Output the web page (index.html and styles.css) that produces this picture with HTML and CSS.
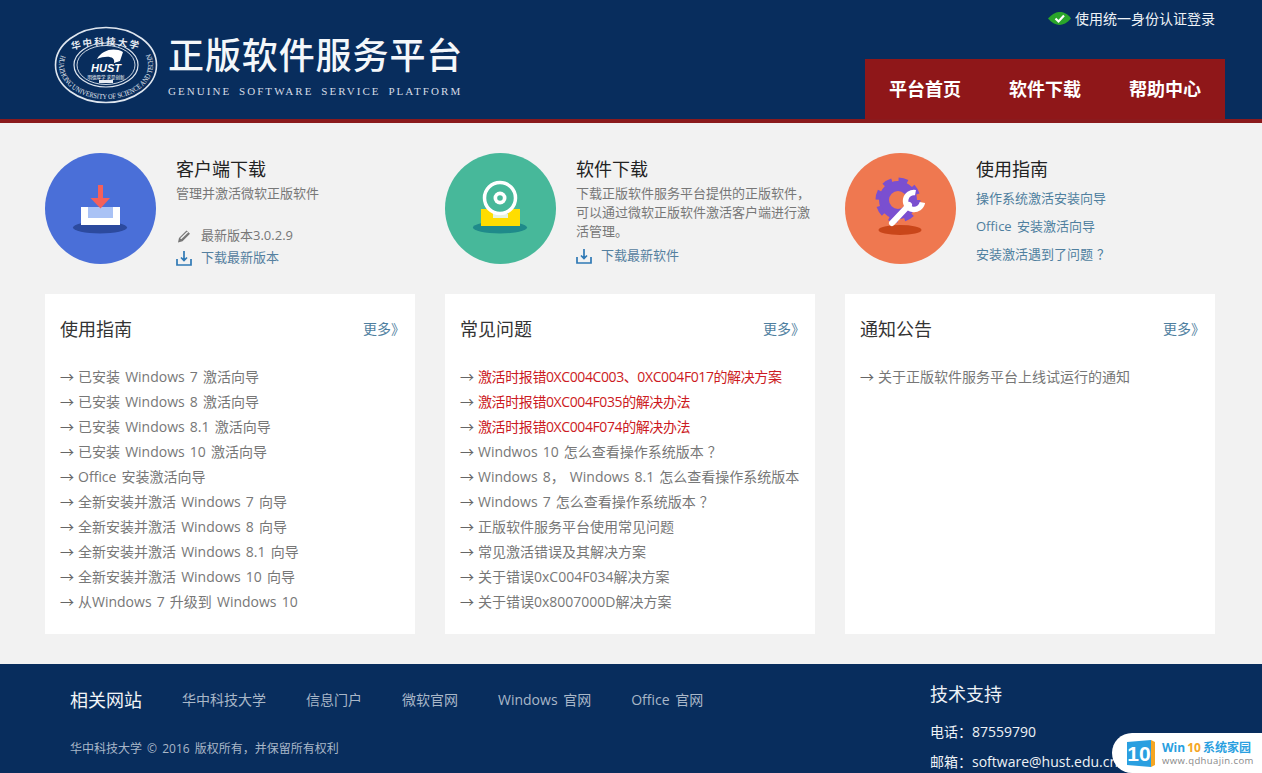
FILE: index.html
```html
<!DOCTYPE html>
<html lang="zh-CN">
<head>
<meta charset="utf-8">
<title>正版软件服务平台</title>
<link rel="stylesheet" href="styles.css">
</head>
<body>
<header class="header">
  <div class="brand">
    <svg class="seal" width="104" height="78" viewBox="0 0 104 78">
      <defs>
        <path id="sealTop" d="M14 25Q52 13 90 25"/>
        <path id="sealBottom" d="M7.100 29A47 34 0 1 0 96.900 29"/>
      </defs>
      <ellipse cx="52" cy="39" rx="50.500" ry="37.500" fill="none" stroke="#dfe6ef" stroke-width="1.600"/>
      <ellipse cx="52" cy="39" rx="32" ry="22" fill="none" stroke="#dfe6ef" stroke-width="1.200"/>
      <ellipse cx="52" cy="39" rx="29" ry="19.500" fill="none" stroke="#dfe6ef" stroke-width=".9"/>
      <text class="seal-cn"><textPath href="#sealTop" startOffset="50%" text-anchor="middle">华中科技大学</textPath></text>
      <text class="seal-en"><textPath href="#sealBottom" textLength="172" lengthAdjust="spacingAndGlyphs">HUAZHONG UNIVERSITY OF SCIENCE AND TECHNOLOGY</textPath></text>
      <path d="M43 33C48 24 60 21 69 26L66 35 60 37C62 30 52 29 43 33Z" fill="#fff"/>
      <text x="37" y="46" class="seal-hust">HUST</text>
      <text x="52" y="52.500" class="seal-motto">明德厚学 求是创新</text>
      <rect x="45" y="54" width="14" height="3" fill="#e6ebf2"/>
    </svg>
    <div class="brand-text">
      <div class="brand-title">正版软件服务平台</div>
      <div class="brand-sub">GENUINE SOFTWARE SERVICE PLATFORM</div>
    </div>
  </div>
  <div class="header-right">
    <a class="login">
      <svg width="23" height="13" viewBox="0 0 23 13"><path d="M0 6.500C5 1 9 0 12 0s8 1.500 11 6.500C19 11 15 13 11.500 13S4 11 0 6.500Z" fill="#2aa52a"/><path d="M7.500 6.500l3 3 5.500-6" fill="none" stroke="#fff" stroke-width="2.200"/></svg>
      使用统一身份认证登录
    </a>
    <nav class="nav">
      <a>平台首页</a><a>软件下载</a><a>帮助中心</a>
    </nav>
  </div>
</header>

<main class="main">
  <section class="features">
    <article class="feature">
      <svg class="badge" width="111" height="111" viewBox="0 0 111 111">
        <circle cx="55.500" cy="55.500" r="55.500" fill="#4a6fd8"/>
        <ellipse cx="55" cy="74.500" rx="27" ry="6" fill="#2c4a9e"/>
        <rect x="36" y="54" width="39" height="18" fill="#fff"/>
        <rect x="43" y="54" width="25" height="11" fill="#a9c2f5"/>
        <path d="M53 32h5v13h7L55.500 55.500 45.500 45H53Z" fill="#f4605a"/>
      </svg>
      <div class="feature-body">
        <h2>客户端下载</h2>
        <p class="desc">管理并激活微软正版软件</p>
        <div class="version">
          <svg width="16" height="16" viewBox="0 0 16 16"><path d="M2 14.500l1-4.500L10.500 2.500l3.500 3.200-7.500 7.500Z" fill="#777"/><path d="M4.200 10.200l7-6.700 1 .9-7 6.800Z" fill="#f2f2f2"/></svg>
          <span>最新版本3.0.2.9</span>
        </div>
        <a class="dl dl-snug">
          <svg width="16" height="16" viewBox="0 0 16 16"><path d="M1 9v6h14V9M8 1v9M5 7.500l3 3 3-3" fill="none" stroke="#2f79b5" stroke-width="1.700"/></svg>
          <span>下载最新版本</span>
        </a>
      </div>
    </article>
    <article class="feature">
      <svg class="badge" width="111" height="111" viewBox="0 0 111 111">
        <circle cx="55.500" cy="55.500" r="55.500" fill="#47b89a"/>
        <ellipse cx="55" cy="74.500" rx="27" ry="6" fill="#1f8a8a"/>
        <rect x="36" y="56" width="39" height="17" fill="#ffdd00"/>
        <rect x="48" y="57" width="15" height="7" fill="#47b89a"/>
        <rect x="48" y="61" width="15" height="4" fill="#e6f3e0"/>
        <circle cx="55" cy="45" r="15.500" fill="#47b89a" stroke="#fff" stroke-width="3.500"/>
        <circle cx="55" cy="45" r="6.500" fill="#fff"/>
        <circle cx="55" cy="45" r="2.800" fill="#47b89a"/>
      </svg>
      <div class="feature-body">
        <h2>软件下载</h2>
        <p class="desc">下载正版软件服务平台提供的正版软件，<br>可以通过微软正版软件激活客户端进行激<br>活管理。</p>
        <a class="dl dl-tight">
          <svg width="16" height="16" viewBox="0 0 16 16"><path d="M1 9v6h14V9M8 1v9M5 7.500l3 3 3-3" fill="none" stroke="#2f79b5" stroke-width="1.700"/></svg>
          <span>下载最新软件</span>
        </a>
      </div>
    </article>
    <article class="feature">
      <svg class="badge" width="111" height="111" viewBox="0 0 111 111">
        <circle cx="55.500" cy="55.500" r="55.500" fill="#ef7850"/>
        <ellipse cx="55" cy="77" rx="21.500" ry="5" fill="#c9461a"/>
        <circle cx="53" cy="47" r="14" fill="none" stroke="#7a4fd0" stroke-width="10"/>
        <circle cx="53" cy="47" r="20" fill="none" stroke="#7a4fd0" stroke-width="5" stroke-dasharray="9 6.700"/>
        <path d="M47 70L64 52" fill="none" stroke="#fff" stroke-width="6" stroke-linecap="round"/>
        <path d="M70.500 39.600A8.500 8.500 0 1 0 77.400 49.500" fill="none" stroke="#fff" stroke-width="5.500"/>
      </svg>
      <div class="feature-body">
        <h2>使用指南</h2>
        <ul class="guide">
          <li><a>操作系统激活安装向导</a></li>
          <li><a>Office 安装激活向导</a></li>
          <li><a>安装激活遇到了问题<span class="qm">？</span></a></li>
        </ul>
      </div>
    </article>
  </section>

  <section class="cards">
    <article class="card">
      <div class="card-head"><h3>使用指南</h3><a class="more">更多》</a></div>
      <ul class="list">
        <li>已安装 Windows 7 激活向导</li>
        <li>已安装 Windows 8 激活向导</li>
        <li>已安装 Windows 8.1 激活向导</li>
        <li>已安装 Windows 10 激活向导</li>
        <li>Office 安装激活向导</li>
        <li>全新安装并激活 Windows 7 向导</li>
        <li>全新安装并激活 Windows 8 向导</li>
        <li>全新安装并激活 Windows 8.1 向导</li>
        <li>全新安装并激活 Windows 10 向导</li>
        <li>从Windows 7 升级到 Windows 10</li>
      </ul>
    </article>
    <article class="card">
      <div class="card-head"><h3>常见问题</h3><a class="more">更多》</a></div>
      <ul class="list">
        <li><span class="red">激活时报错0XC004C003、0XC004F017的解决方案</span></li>
        <li><span class="red">激活时报错0XC004F035的解决办法</span></li>
        <li><span class="red">激活时报错0XC004F074的解决办法</span></li>
        <li>Windwos 10 怎么查看操作系统版本<span class="qm">？</span></li>
        <li>Windows 8， Windows 8.1 怎么查看操作系统版本</li>
        <li>Windows 7 怎么查看操作系统版本<span class="qm">？</span></li>
        <li>正版软件服务平台使用常见问题</li>
        <li>常见激活错误及其解决方案</li>
        <li>关于错误0xC004F034解决方案</li>
        <li>关于错误0x8007000D解决方案</li>
      </ul>
    </article>
    <article class="card">
      <div class="card-head"><h3>通知公告</h3><a class="more">更多》</a></div>
      <ul class="list">
        <li>关于正版软件服务平台上线试运行的通知</li>
      </ul>
    </article>
  </section>
</main>

<footer class="footer">
  <div class="footer-left">
    <div class="links">
      <h4>相关网站</h4>
      <a>华中科技大学</a><a>信息门户</a><a>微软官网</a><a>Windows 官网</a><a>Office 官网</a>
    </div>
    <p class="copy">华中科技大学 © 2016 版权所有，并保留所有权利</p>
  </div>
  <div class="support">
    <h4>技术支持</h4>
    <p>电话：87559790</p>
    <p>邮箱：software@hust.edu.cn</p>
  </div>
</footer>

<div class="watermark">
  <svg width="28" height="27" viewBox="0 0 28 27">
    <path d="M0 2l24-2v27l-24-2Z" fill="#2a9fe0"/>
    <path d="M24 0l4 2v23l-4 2Z" fill="#f5a623"/>
    <text x="12" y="21" class="wm-logo">10</text>
  </svg>
  <div class="wm-text">
    <div class="wm-title">Win<span class="wm-ten">10</span>系统家园</div>
    <div class="wm-url">www.qdhuajin.com</div>
  </div>
</div>
</body>
</html>
```

FILE: styles.css
```css
* { box-sizing: border-box; }
html, body { margin: 0; padding: 0; height: 773px; overflow: hidden; }
body {
  position: relative;
  background: #f2f2f2;
  font-family: "Open Sans", "Noto Sans CJK SC", sans-serif;
  font-size: 14px;
  color: #777;
}
h2, h3, h4, p, ul { margin: 0; padding: 0; font-weight: 400; }
ul { list-style: none; }
.qm { padding-left: 4px; }

.header {
  height: 123px;
  background: #082d5d;
  border-bottom: 4px solid #8b1a1d;
  display: flex;
  justify-content: space-between;
  padding: 0 37px 0 54px;
}
.brand { display: flex; align-items: flex-start; gap: 10px; height: 119px; }
.seal { display: block; margin-top: 26px; flex: none; overflow: visible; }
.seal-cn { font-size: 9.500px; fill: #e6ebf2; font-family: "Noto Sans CJK SC", sans-serif; letter-spacing: 2px; font-weight: 700; }
.seal-en { font-size: 7.500px; fill: #e6ebf2; font-family: "Liberation Serif", serif; }
.seal-hust { font-size: 11px; fill: #fff; font-family: "Liberation Sans", sans-serif; font-weight: 700; font-style: italic; }
.seal-motto { font-size: 4.500px; fill: #fff; text-anchor: middle; font-family: "Noto Sans CJK SC", sans-serif; }
.brand-text { width: 295px; padding-top: 31px; }
.brand-title { font-size: 36px; line-height: 44px; letter-spacing: .9px; font-weight: 500; color: #f4f7fa; white-space: nowrap; font-family: "Noto Sans CJK SC", sans-serif; }
.brand-sub { margin-top: 10px; font-family: "Liberation Serif", serif; font-size: 11px; line-height: 12px; letter-spacing: 2.050px; word-spacing: 3px; color: #d5dce6; white-space: nowrap; }

.header-right { display: flex; flex-direction: column; align-items: flex-end; }
.login { display: flex; align-items: center; gap: 4px; height: 20px; margin-top: 8px; margin-right: 10px; color: #eef2f6; font-size: 14px; white-space: nowrap; }
.nav { display: flex; margin-top: 31px; height: 60px; background: #8f1719; }
.nav a { width: 120px; line-height: 60px; text-align: center; color: #fff; font-size: 18px; font-weight: 700; }

.main { padding: 30px 47px 30px 45px; height: 541px; }
.features { display: flex; gap: 30px; height: 141px; }
.feature { width: 370px; display: flex; gap: 20px; }
.badge { flex: none; display: block; }
.feature-body { flex: 1; min-width: 0; }
.feature h2 { font-size: 18px; line-height: 24px; color: #222; margin-top: 4px; }
.desc { margin-top: 3px; font-size: 13px; line-height: 19px; color: #777; }
.version, .dl { display: flex; align-items: center; gap: 9px; font-size: 13px; line-height: 23px; }
.version { margin-top: 21px; }
.dl { color: #55809f; }
.dl-snug { margin-top: -1px; }
.dl-tight { margin-top: 3px; }
.guide { margin-top: 3px; }
.guide li { font-size: 13px; line-height: 28px; color: #4f7f9f; word-spacing: 2px; }

.cards { display: flex; gap: 30px; height: 340px; }
.card { width: 370px; height: 340px; background: #fff; padding: 0 10px 0 15px; }
.card-head { display: flex; justify-content: space-between; align-items: center; height: 68px; }
.card-head h3 { font-size: 18px; color: #333; }
.more { font-size: 14px; color: #4f7f9f; }
.list { padding-top: 2px; }
.list li { height: 25px; font-size: 14px; line-height: 25px; color: #777; white-space: nowrap; word-spacing: 1.500px; }
.list li::before { content: "→"; margin-right: 4px; font-size: 14px; color: #666; }
.red { color: #cc1a22; letter-spacing: -.4px; }

.footer {
  height: 109px;
  background: #082d5d;
  display: flex;
  padding: 0 0 0 70px;
  overflow: hidden;
}
.footer-left { width: 860px; }
.links { display: flex; align-items: center; gap: 40px; height: 70px; color: #a9b7c8; font-size: 14px; word-spacing: 2px; }
.links h4 { font-size: 18px; color: #f2f4f7; }
.copy { font-size: 12px; line-height: 18px; margin-top: 6px; color: #a9b7c8; word-spacing: 2px; }
.support { color: #eef2f6; }
.support h4 { font-size: 18px; line-height: 24px; margin-top: 18px; margin-bottom: 11px; }
.support p { font-size: 14px; line-height: 30px; white-space: nowrap; }

.watermark {
  position: absolute;
  right: 0;
  bottom: 0;
  width: 150px;
  height: 40px;
  background: #fff;
  border-radius: 20px 0 0 20px;
  display: flex;
  align-items: center;
  gap: 7px;
  padding-left: 15px;
}
.wm-logo { font-family: "Liberation Sans", sans-serif; font-size: 21px; font-weight: 700; fill: #fff; text-anchor: middle; }
.wm-text { white-space: nowrap; }
.wm-title { font-size: 12px; line-height: 15px; font-weight: 700; color: #2a9fe0; }
.wm-ten { color: #f5a623; margin: 0 2px; }
.wm-url { font-size: 9.500px; line-height: 12px; color: #888; letter-spacing: .4px; }
```
